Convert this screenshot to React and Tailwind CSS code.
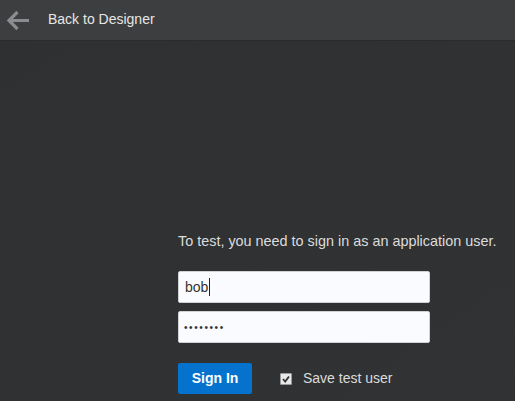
import React from "react";

export default function App() {
  return (
    <div
      className="w-[515px] h-[401px] overflow-hidden bg-[#303133] flex flex-col"
      style={{ fontFamily: '"Liberation Sans", Arial, sans-serif' }}
    >
      <div className="h-[41px] shrink-0 bg-[#3d3e40] border-b border-[#2a2b2d] shadow-[0_2px_3px_rgba(0,0,0,0.35)] flex items-center">
        <div className="w-[34px] flex items-center justify-center pl-[2px]">
          <svg width="24" height="21" viewBox="0 0 24 21">
            <path
              d="M11.5 2 L3 10.5 L11.5 19 M3 10.5 H23"
              fill="none"
              stroke="#8a8c8f"
              strokeWidth="3.2"
              strokeLinecap="butt"
              strokeLinejoin="miter"
            />
          </svg>
        </div>
        <span className="ml-[14px] text-[14px] leading-[16px] text-[#e6e6e6] -mt-[3px]">Back to Designer</span>
      </div>
      <div className="flex-1 bg-gradient-to-br from-[#2f3032] to-[#313234] pl-[178px] pt-[192px]">
        <p className="text-[14.4px] leading-[16px] text-[#dcdcdc] whitespace-nowrap">
          To test, you need to sign in as an application user.
        </p>
        <div className="mt-[22px] w-[252px] h-[32px] bg-[#fafbfe] border border-[#d0d2d6] rounded-[2px] flex items-center px-[6px]">
          <span className="text-[14px] text-[#333]">bob</span>
          <span className="w-px h-[18px] bg-[#222] ml-px"></span>
        </div>
        <div className="mt-[8px] w-[252px] h-[32px] bg-[#fafbfe] border border-[#d0d2d6] rounded-[2px] flex items-center px-[5px]">
          <span className="text-[10px] text-[#333] tracking-[1.6px]">••••••••</span>
        </div>
        <div className="mt-[20px] flex items-center">
          <button className="w-[74px] h-[31px] bg-[#0572ce] rounded-[2px] text-white font-bold text-[14px]">
            Sign In
          </button>
          <div className="ml-[28px] w-[12px] h-[12px] bg-[#e8e8e8] border border-[#9a9a9a] rounded-[1px] flex items-center justify-center">
            <svg width="10" height="10" viewBox="0 0 10 10">
              <path d="M2 5 L4.2 7.5 L8 2.5" fill="none" stroke="#333" strokeWidth="1.8" />
            </svg>
          </div>
          <span className="ml-[11px] text-[14px] text-[#dcdcdc]">Save test user</span>
        </div>
      </div>
    </div>
  );
}
